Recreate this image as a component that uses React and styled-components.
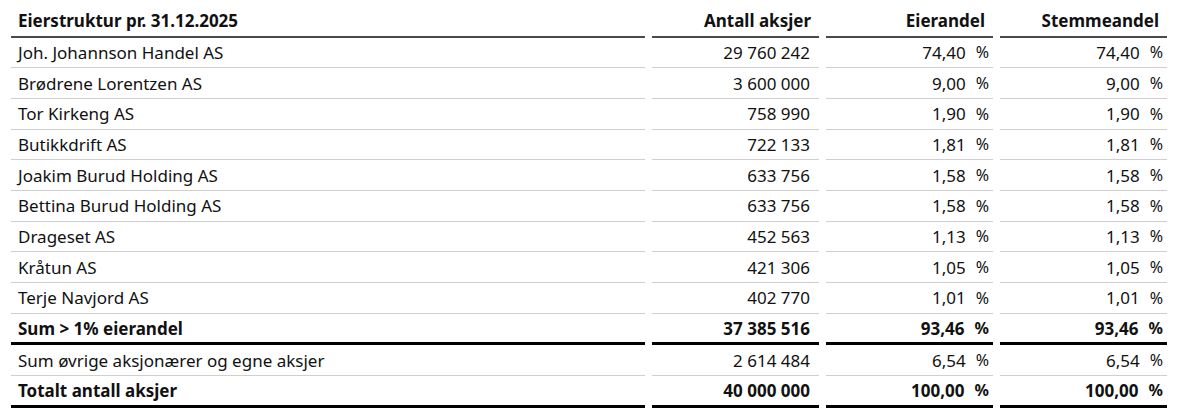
import React from 'react';
import styled, { createGlobalStyle } from 'styled-components';

const GlobalStyle = createGlobalStyle`
  html, body {
    margin: 0;
    padding: 0;
    background: #ffffff;
  }
  body {
    font-family: "Noto Sans", "Open Sans", sans-serif;
    color: #111111;
  }
`;

const Wrapper = styled.div`
  padding: 6px 0 0 11px;
`;

const Table = styled.div`
  display: grid;
  grid-template-columns: 634px 167px 167px 167px;
  column-gap: 7px;
  width: 1156px;
`;

const HeadCell = styled.div`
  height: 29.5px;
  display: flex;
  align-items: center;
  justify-content: ${(p) => (p.$right ? 'flex-end' : 'flex-start')};
  padding: ${(p) => (p.$right ? '0 8px 0 0' : '0 0 0 7px')};
  border-bottom: 2px solid #4a4a4a;
  font-size: 17px;
  font-weight: 700;
  white-space: nowrap;
`;

const Cell = styled.div`
  height: ${(p) => (p.$bold ? '28.7px' : '29.7px')};
  display: flex;
  align-items: center;
  justify-content: ${(p) => (p.$right ? 'flex-end' : 'flex-start')};
  padding: ${(p) => (p.$pct ? '0 4px 0 0' : p.$right ? '0 9px 0 0' : '0 0 0 7px')};
  gap: 10px;
  border-bottom: ${(p) => (p.$bold ? '3px solid #000' : '1px solid #cfcfcf')};
  font-size: 17px;
  font-weight: ${(p) => (p.$bold ? 700 : 400)};
  white-space: nowrap;
`;

const Pct = styled.span`
  font-size: 16px;
`;

const owners = [
  ['Joh. Johannson Handel AS', '29 760 242', '74,40'],
  ['Brødrene Lorentzen AS', '3 600 000', '9,00'],
  ['Tor Kirkeng AS', '758 990', '1,90'],
  ['Butikkdrift AS', '722 133', '1,81'],
  ['Joakim Burud Holding AS', '633 756', '1,58'],
  ['Bettina Burud Holding AS', '633 756', '1,58'],
  ['Drageset AS', '452 563', '1,13'],
  ['Kråtun AS', '421 306', '1,05'],
  ['Terje Navjord AS', '402 770', '1,01'],
];

const Row = ({ name, shares, pct, bold }) => (
  <>
    <Cell $bold={bold}>{name}</Cell>
    <Cell $bold={bold} $right>{shares}</Cell>
    <Cell $bold={bold} $right $pct>
      {pct}
      <Pct>%</Pct>
    </Cell>
    <Cell $bold={bold} $right $pct>
      {pct}
      <Pct>%</Pct>
    </Cell>
  </>
);

export default function App() {
  return (
    <Wrapper>
      <GlobalStyle />
      <Table>
        <HeadCell>Eierstruktur pr. 31.12.2025</HeadCell>
        <HeadCell $right>Antall aksjer</HeadCell>
        <HeadCell $right>Eierandel</HeadCell>
        <HeadCell $right>Stemmeandel</HeadCell>
        {owners.map(([name, shares, pct]) => (
          <Row key={name} name={name} shares={shares} pct={pct} />
        ))}
        <Row name="Sum > 1% eierandel" shares="37 385 516" pct="93,46" bold />
        <Row name="Sum øvrige aksjonærer og egne aksjer" shares="2 614 484" pct="6,54" />
        <Row name="Totalt antall aksjer" shares="40 000 000" pct="100,00" bold />
      </Table>
    </Wrapper>
  );
}
